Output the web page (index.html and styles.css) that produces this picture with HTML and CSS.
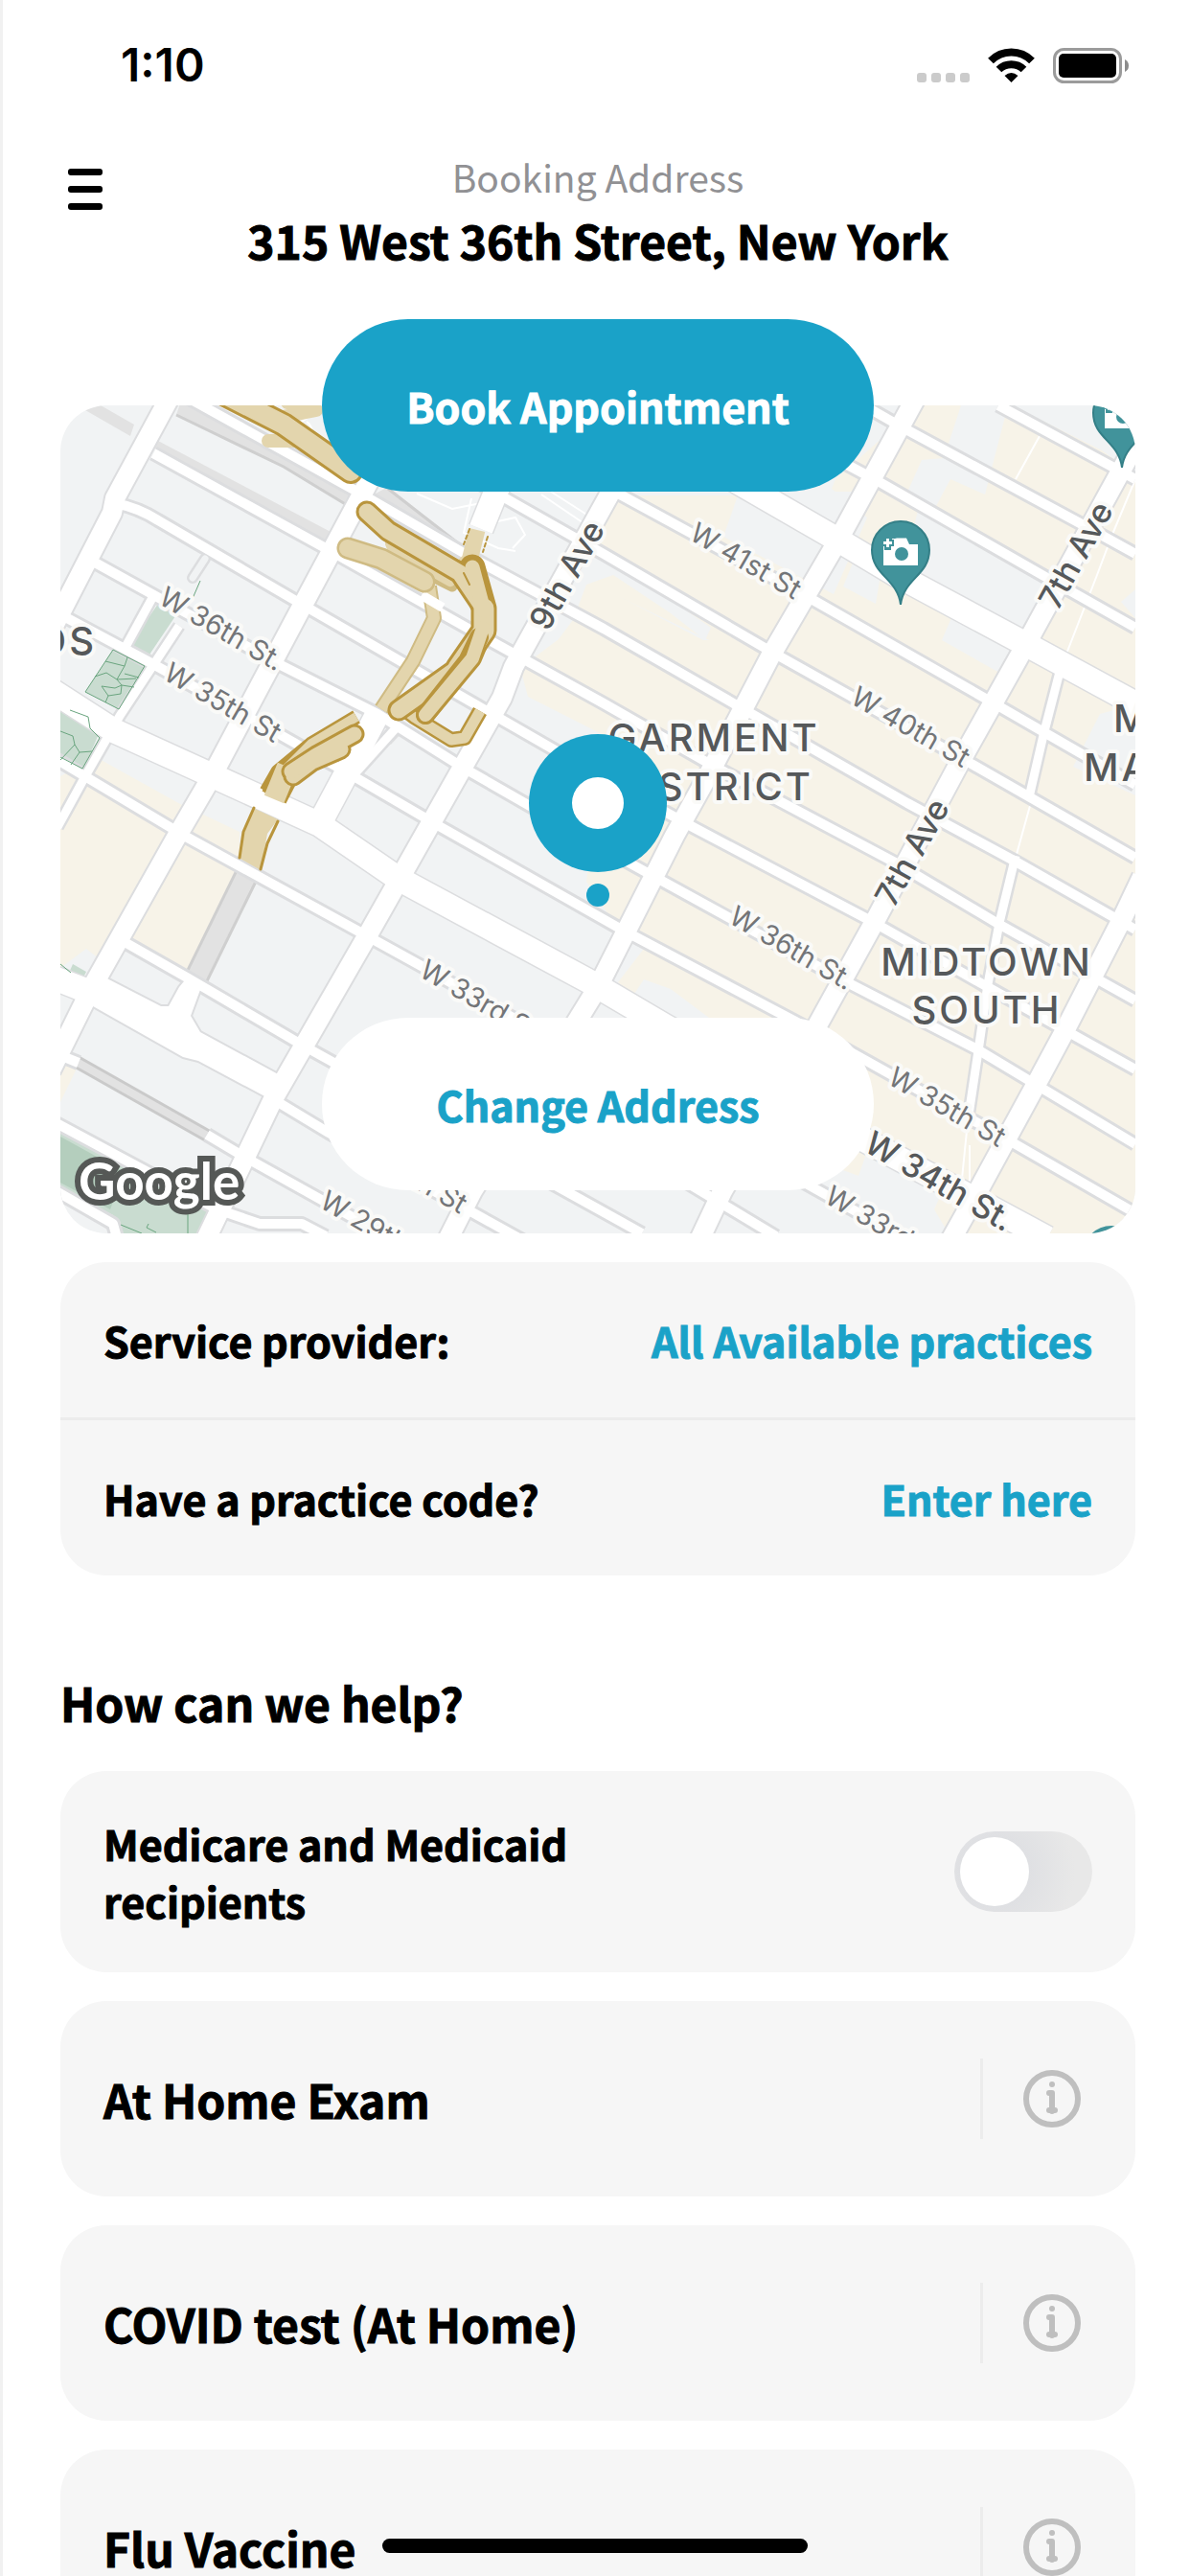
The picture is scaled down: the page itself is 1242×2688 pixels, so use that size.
FILE: index.html
```html
<!DOCTYPE html>
<html lang="en">
<head>
<meta charset="utf-8">
<meta name="viewport" content="width=device-width, initial-scale=1">
<title>Book an appointment</title>
<link rel="stylesheet" href="styles.css">
</head>
<body>
<div class="screen">
  <div class="status">
    <span class="time">1:10</span>
    <svg class="status-icons" viewBox="957 45 222 44" width="222" height="44" aria-hidden="true">
      <g fill="#cbcbcb"><rect x="957" y="75" width="10" height="10" rx="3"/><rect x="972" y="75" width="10" height="10" rx="3"/><rect x="987" y="75" width="10" height="10" rx="3"/><rect x="1002" y="75" width="10" height="10" rx="3"/></g>
      <g fill="none" stroke="#000" stroke-width="8"><path d="M1034 62.500A30 30 0 0 1 1077 62.500"/><path d="M1042.500 71.500A18.500 18.500 0 0 1 1068.500 71.500"/></g>
      <path d="M1055.500 85L1048.500 78Q1055.500 72 1062.500 78Z"/>
      <rect x="1100.500" y="50.500" width="69" height="34" rx="10" fill="none" stroke="#9b9b9b" stroke-width="3"/>
      <rect x="1105" y="55" width="60" height="25" rx="5"/>
      <path d="M1174 61Q1178 63 1178 67.500Q1178 72 1174 74Z" fill="#8c8c8c"/>
    </svg>
  </div>

  <header class="header">
    <button class="menu" type="button" aria-label="Menu"><span></span><span></span><span></span></button>
    <div class="address">
      <p class="caption">Booking Address</p>
      <h1>315 West 36th Street, New York</h1>
    </div>
  </header>

  <section class="map-wrap">
    <svg class="map" viewBox="63 423 1122 864" preserveAspectRatio="xMidYMid slice" role="img" aria-label="Map of Midtown South">
      <defs>
        <g id="streets">
          <path d="M1042 423L1185 500"/>
          <path d="M905 425L940 445L1129 547L1185 578"/>
          <path d="M800 440L918 503L1093 603L1185 655"/>
          <path d="M600 490L649 517L838 620L1034 732L1185 819"/>
          <path d="M480 493L630 578L805 680L1005 792L1185 895"/>
          <path d="M196 415L380 517L489 580L630 656L776 740L947 838L1060 899L1185 970"/>
          <path d="M160 473L347 576L489 656L630 734L744 799L936 901L1042 964L1185 1044"/>
          <path d="M120 525Q145 530 165 543L314 630L503 739L630 812L725 864L911 962L1031 1030L1185 1116"/>
          <path d="M90 582L293 694L394 745L485 802L656 900L882 1024L1020 1095L1185 1194"/>
          <path d="M55 637L158 692L293 767L369 810L460 863L649 970L838 1070L1053 1190L1185 1266"/>
          <path d="M55 790L194 873L380 975L438 1007L850 1240L940 1290"/>
          <path d="M130 983L202 1024L318 1092L670 1287"/>
          <path d="M700 1224L810 1290"/>
          <path d="M290 1150L343 1182L547 1295"/>
          <path d="M55 1098L82 1109"/><path d="M216 1184L253 1206L400 1288"/>
          <path d="M55 1170L227 1262L271 1277H315L340 1290"/>
          <path d="M55 1241L118 1277L123 1295"/>
        </g>
        <g id="avenues">
          <path d="M178 413L120 520L117 535L50 665"/>
          <path d="M390 493L314 635L220 812L185 872L95 1032L53 1117"/>
          <path d="M645 500L536 696L524 728L482 802L383 977L285 1147L214 1295"/>
          <path d="M957 413L874 565L805 683L744 800L704 872L624 1030L493 1243L465 1298"/>
          <path d="M1195 445L1169 493L1071 672L1002 795L911 965L853 1070L754 1243L728 1298"/>
          <path d="M1192 915L1172 957L1109 1080L1080 1134L1013 1257L990 1298"/>
        </g>
        <g id="wides">
          <path d="M765 500L874 563L936 600L1074 674L1190 737"/>
          <path d="M50 718L120 763L333 860L416 917L613 1023L693 1070L903 1190L1093 1292"/>
          <path d="M50 1018L96 1036"/>
          <path d="M525 495L502 552"/>
          <path d="M394 745L362 806L330 866"/>
        </g>
        <g id="lanes">
          <path d="M187 653L125 747L89 810L60 863"/>
          <path d="M160 622L131 675"/>
          <path d="M413 760L368 810"/>
          <path d="M1107 697L1089 767L1074 832"/>
          <path d="M1060 893L1043 963L1031 1027L1022 1090L1009 1177"/>
        </g>
        <path id="junction" d="M187 1030L192 1024H204L210 1030L199 1060L209 1077L294 1123L282 1147L207 1107L191 1103L90 1046L100 1015L168 1050H176Z"/>
        <g id="place-pin">
          <path d="M940 631C937 604 910 600 910 574A30 30 0 0 1 970 574C970 600 943 604 940 631Z" fill="#41939b" stroke="#347f87" stroke-width="2"/>
          <path d="M922 568H931V562H934L936 561.500H946L949 568H958V590H922Z" fill="#fff"/>
          <circle cx="941" cy="578" r="7" fill="#41939b"/>
          <path d="M926.500 560V574M920 566.500H933" stroke="#41939b" stroke-width="7"/>
          <path d="M926.500 562V571M922 566.500H931" stroke="#fff" stroke-width="3"/>
        </g>
      </defs>

      <rect x="63" y="423" width="1122" height="864" fill="#f1f3f4"/>
      <g fill="#f7f3e8">
        <path d="M951 423H1185V1287H990L975 1262L985 1240L903 1207L896 1227L850 1210L740 1062L700 1032L672 1022L660 1040L645 1025L672 990L649 975L612 920L630 767L551 727L543 697L583 667L598 647L612 610L640 600L700 640L736 668L742 655L620 570L640 517L770 517L755 560L870 620L905 540L868 510L872 500L940 440Z"/>
        <path d="M63 810L100 790L190 840L170 890L103 1000L90 990L63 1010Z"/>
        <path d="M208 848L250 868V905L205 1018L133 980L190 873Z"/>
        <path d="M63 1108L80 1115L63 1150Z"/>
      </g>
      <g fill="#f1f3f4">
        <path d="M1003 423H1052L1028 516L992 500L976 530L945 518L962 480L985 478Z"/>
        <path d="M1056 423H1185V495L1150 470Z"/>
        <path d="M958 533L1093 607L1071 660L942 595Z"/>
        <path d="M893 580L920 594L914 630L880 612Z"/>
        <path d="M995 640L1060 675L1045 703L983 668Z"/>
        <path d="M1170 628L1185 615V645Z"/>
        <path d="M1148 745L1185 735V830L1120 800Z"/>
        <path d="M620 610L740 668L734 668L655 627Z"/>
        <path d="M770 513L893 513L875 548L830 545Z"/>
      </g>
      <g fill="#c9dcd0">
        <path d="M165 630L185 640L156 683L136 672Z"/>
        <path d="M118 678L151 695L124 740L89 722Z"/>
        <path d="M73 736L107 757L87 803L63 790V740Z"/>
        <path d="M76 1006L90 1014L86 1022L72 1015Z"/>
        <path d="M63 1180L220 1266L206 1287H125L118 1268L63 1240Z"/>
      </g>
      <path d="M63 1186L130 1223L115 1262L63 1234Z" fill="#b4cebd"/>
      <g fill="#e2e2e2">
        <path d="M184 433L296 487L362 527L372 515L300 468L190 415Z"/>
        <path d="M89 428L136 455L140 443L105 423Z"/>
        <path d="M165 460L347 556L342 566L160 467Z"/>
        <path d="M405 508L482 568L470 572L392 515Z"/>
        <path d="M570 513L630 553M400 770L422 762L408 777Z"/>
      </g>
      <path d="M184 433L296 487L362 527M405 510L482 570" fill="none" stroke="#cfcfcf" stroke-width="3"/>
      <g fill="none" stroke="#fff" stroke-width="2">
        <path d="M565 516L618 552M575 513L625 545M435 515L472 531L502 525M492 520L484 556L520 572L538 575M515 545L538 540L548 558L535 572M1085 455L1060 500M1160 560L1145 600L1110 690M1185 500L1160 560M1078 830L1060 895M1009 1180L1004 1230M1012 1195V1240M320 440Q328 445 325 460M330 430L300 450"/>
      </g>
      <g fill="none" stroke-linecap="butt">
        <path d="M258 912L205 1020" stroke="#cfcfcf" stroke-width="26"/>
        <path d="M258 912L205 1020" stroke="#e2e2e2" stroke-width="20"/>
        <path d="M80 1108L218 1186" stroke="#cacaca" stroke-width="14"/>
        <path d="M80 1108L218 1186" stroke="#e2e2e2" stroke-width="8"/>
      </g>

      <g fill="none" stroke="#dcdddf" stroke-linejoin="round">
        <use href="#streets" stroke-width="16"/>
        <use href="#lanes" stroke-width="14"/>
        <use href="#avenues" stroke-width="24"/>
        <use href="#wides" stroke-width="28"/>
        <path d="M214 583L201 603" stroke-width="12" stroke-linecap="round"/>
        <use href="#junction" stroke-width="4"/>
      </g>
      <g fill="none" stroke="#fff" stroke-linejoin="round">
        <use href="#streets" stroke-width="10"/>
        <use href="#lanes" stroke-width="9"/>
        <use href="#avenues" stroke-width="20"/>
        <use href="#wides" stroke-width="25"/>
      </g>
      <use href="#junction" fill="#fff"/>
      <path d="M214 583L201 603" stroke="#f1f3f4" stroke-width="7" stroke-linecap="round"/>
      <g fill="none" stroke="#6aa57f" stroke-width="1">
        <path d="M118 678L151 695L124 740L89 722ZM99 706L111 702L122 709L142 708M110 690L130 695L133 686M130 695L122 709L127 715L126 724L113 726L106 716L120 718L127 715L140 717M113 726L110 733M130 703L145 707"/>
        <path d="M73 741L92 748L94 760L104 770L86 802L63 790M63 763L76 768L78 777L63 793M78 777L83 785L74 798M83 785L96 784M209 606L199 629"/>
        <path d="M126 1278L148 1287M155 1277L153 1281L163 1286M196 1263V1287M63 1006L74 1015"/>
      </g>

      <g fill="none" stroke-linecap="round" stroke-linejoin="round">
        <path d="M280 438L330 428L300 420M280 460H310" stroke="#e3d5ad" stroke-width="14"/>
        <path d="M235 412L296 443L366 492" stroke="#b9953d" stroke-width="26"/>
        <path d="M235 412L296 443L366 492" stroke="#e3d5ad" stroke-width="20"/>

        <path d="M498 553L490 585L482 592" stroke="#e3d5ad" stroke-width="17" stroke-linecap="butt"/>
        <path d="M490 552L484 568M509 560L504 576" stroke="#b9953d" stroke-width="2" stroke-dasharray="4 3"/>

        <path d="M448 612L453 645L431 690L398 740" stroke="#cfbb83" stroke-width="16" stroke-linecap="butt"/>
        <path d="M448 612L453 645L431 690L398 740" stroke="#e3d5ad" stroke-width="12" stroke-linecap="butt"/>
        <path d="M440 621L462 634" stroke="#fff" stroke-width="10" stroke-linecap="butt"/>
        <path d="M408 567L418 585L472 612L480 595" stroke="#cfbb83" stroke-width="11"/>
        <path d="M408 567L475 600L470 606L410 572Z" fill="#e3d5ad" stroke="#e3d5ad" stroke-width="12"/>
        <path d="M363 572L398 583L443 607" stroke="#cfbb83" stroke-width="23"/>
        <path d="M363 572L398 583L443 607" stroke="#e3d5ad" stroke-width="18"/>

        <path d="M415 735L432 748L471 772L485 770L501 742" stroke="#b9953d" stroke-width="16" stroke-linecap="butt"/>
        <path d="M415 735L432 748L471 772L485 770L501 742" stroke="#e3d5ad" stroke-width="11" stroke-linecap="butt"/>
        <path d="M493 592L505 633V658L493 687L444 746" stroke="#b9953d" stroke-width="20"/>
        <path d="M383 534L405 554L480 598L505 635V658L478 697L416 741" stroke="#b9953d" stroke-width="23"/>
        <path d="M493 592L505 635V658L478 697" stroke="#b9953d" stroke-width="27"/>
        <path d="M383 534L405 554L480 598L505 635V658L478 697L416 741" stroke="#e3d5ad" stroke-width="17"/>
        <path d="M505 635V658L478 697" stroke="#e3d5ad" stroke-width="21"/>
        <path d="M500 665L488 690L444 746" stroke="#b9953d" stroke-width="20"/>
        <path d="M504 655L493 687L444 746" stroke="#e3d5ad" stroke-width="14"/>
        <path d="M493 592L505 637" stroke="#e3d5ad" stroke-width="15"/>
        <path d="M484 598L490 610" stroke="#b9953d" stroke-width="2"/>

        <path d="M372 748L325 776L290 805L278 826" stroke="#b9953d" stroke-width="15" stroke-linecap="butt"/>
        <path d="M372 748L325 776L296 805L280 830" stroke="#e3d5ad" stroke-width="10" stroke-linecap="butt"/>
        <path d="M300 805L286 832" stroke="#b9953d" stroke-width="28" stroke-linecap="butt"/>
        <path d="M300 800L286 834" stroke="#e3d5ad" stroke-width="22" stroke-linecap="butt"/>
        <path d="M356 782L326 795L306 810" stroke="#b9953d" stroke-width="21"/>
        <path d="M370 766L330 788L304 805" stroke="#b9953d" stroke-width="21"/>
        <path d="M356 782L326 795L306 810" stroke="#e3d5ad" stroke-width="15"/>
        <path d="M370 766L330 788L304 805" stroke="#e3d5ad" stroke-width="15"/>
        <path d="M264 843L254 870L249 895L272 908L279 870L290 855Z" fill="#e3d5ad" stroke="none"/>
        <path d="M265 843L254 868L250 895M290 857L279 880L272 907" stroke="#b9953d" stroke-width="3"/>
      </g>

      <g class="street">
        <text transform="translate(164 629) rotate(30)">W 36th St.</text>
        <text transform="translate(169 708) rotate(30)">W 35th St</text>
        <text transform="translate(718 562) rotate(30)">W 41st St</text>
        <text transform="translate(886 733) rotate(30)">W 40th St</text>
        <text transform="translate(759 962) rotate(30)">W 36th St.</text>
        <text transform="translate(925 1130) rotate(30)">W 35th St</text>
        <text transform="translate(859 1254) rotate(30)">W 33rd St</text>
        <text transform="translate(436 1018) rotate(30)">W 33rd St</text>
        <text transform="translate(332 1259) rotate(30)">W 29th St</text>
        <text transform="translate(480 1267) rotate(30)" text-anchor="end">W 30th St</text>
      </g>
      <g class="avenue">
        <text transform="translate(572 660) rotate(-61)">9th Ave</text>
        <text transform="translate(1104 638) rotate(-61)">7th Ave</text>
        <text transform="translate(933 948) rotate(-61)">7th Ave</text>
        <text transform="translate(900 1200) rotate(30)">W 34th St.</text>
      </g>
      <g class="district">
        <text x="745" y="784" text-anchor="middle">GARMENT</text>
        <text x="745" y="835" text-anchor="middle">DISTRICT</text>
        <text x="1030" y="1018" text-anchor="middle">MIDTOWN</text>
        <text x="1030" y="1068" text-anchor="middle">SOUTH</text>
        <text x="1162" y="764">MIDTOWN</text>
        <text x="1131" y="815">MANHATTAN</text>
        <text x="101" y="683" text-anchor="end">YARDS</text>
      </g>

      <use href="#place-pin"/>
      <use href="#place-pin" x="231" y="-143"/>
      <circle cx="1160" cy="1309" r="30" fill="#41939b"/>
      <text class="brand" x="82" y="1252">Google</text>

      <circle cx="624" cy="838" r="72" fill="#1aa2c8"/>
      <circle cx="624" cy="838" r="27" fill="#fff"/>
      <circle cx="624" cy="934" r="12" fill="#1aa2c8"/>
    </svg>
    <button class="pill pill-primary" type="button">Book Appointment</button>
    <button class="pill pill-plain" type="button">Change Address</button>
  </section>

  <section class="card provider">
    <div class="row"><span>Service provider:</span><button class="link" type="button">All Available practices</button></div>
    <div class="row"><span>Have a practice code?</span><button class="link" type="button">Enter here</button></div>
  </section>

  <h2>How can we help?</h2>

  <div class="card medicare">
    <label for="medicare">Medicare and Medicaid recipients</label>
    <input class="toggle" id="medicare" type="checkbox" role="switch">
  </div>
  <div class="card service">
    <h3>At Home Exam</h3>
    <button class="info" type="button" aria-label="About At Home Exam"><svg viewBox="0 0 60 60" width="60" height="60"><use href="#info-icon"/></svg></button>
  </div>
  <div class="card service">
    <h3>COVID test (At Home)</h3>
    <button class="info" type="button" aria-label="About COVID test"><svg viewBox="0 0 60 60" width="60" height="60"><use href="#info-icon"/></svg></button>
  </div>
  <div class="card service">
    <h3>Flu Vaccine</h3>
    <button class="info" type="button" aria-label="About Flu Vaccine"><svg viewBox="0 0 60 60" width="60" height="60"><use href="#info-icon"/></svg></button>
  </div>
  <div class="home-indicator"></div>
</div>
<svg class="symbols" aria-hidden="true">
  <symbol id="info-icon" viewBox="0 0 60 60">
    <circle cx="30" cy="30" r="27" fill="none" stroke="#bfbfbf" stroke-width="6"/>
    <circle cx="30" cy="15" r="3" fill="#bfbfbf"/>
    <path d="M27 24H30V43" fill="none" stroke="#bfbfbf" stroke-width="6" stroke-linecap="round" stroke-linejoin="round"/>
    <path d="M27 42H33" stroke="#bfbfbf" stroke-width="6" stroke-linecap="round"/>
  </symbol>
</svg>
</body>
</html>
```
FILE: styles.css
```css
* { box-sizing: border-box; }

body {
  margin: 0;
  background: #fff;
  color: #000;
  font-family: "Noto Sans CJK SC", "Noto Sans", sans-serif;
}

h1, h2, h3, p { margin: 0; }

h1, h2, h3, .row, .pill, .medicare label { -webkit-text-stroke: 1px currentColor; }

button {
  border: 0;
  padding: 0;
  background: none;
  font: inherit;
  color: inherit;
}

.symbols { position: absolute; width: 0; height: 0; }

.screen {
  height: 100vh;
  overflow: hidden;
  padding: 0 57px 0 60px;
  border-left: 3px solid #f1f1f1;
}

.status {
  display: flex;
  justify-content: space-between;
  align-items: center;
  height: 136px;
  padding: 0 6px 0 63px;
}

.time {
  font-family: Inter, sans-serif;
  font-size: 48px;
  font-weight: 600;
  line-height: 60px;
}

.header {
  display: grid;
  grid-template-columns: 48px 1fr 48px;
  padding: 18px 0 137px;
}

.menu {
  display: flex;
  flex-direction: column;
  gap: 11px;
  height: 48px;
  padding: 22px 0 0 8px;
}

.menu span {
  flex: none;
  width: 36px;
  height: 7px;
  border-radius: 3px;
  background: #000;
}

.address { text-align: center; }

.caption {
  color: #919194;
  font-size: 39px;
  line-height: 60px;
}

h1 {
  font-size: 48px;
  line-height: 72px;
}

.map-wrap {
  position: relative;
  margin-bottom: 30px;
}

.map {
  display: block;
  width: 100%;
  height: 864px;
  border-radius: 48px;
}

.street, .avenue, .district {
  font-family: Inter, Roboto, sans-serif;
  paint-order: stroke;
  stroke: #fafaf8;
  stroke-width: 8px;
  stroke-linejoin: round;
}

.street { font-size: 29px; fill: #737578; }
.avenue { font-size: 34px; font-weight: 500; fill: #55585a; }

.district {
  font-size: 40px;
  font-weight: 500;
  letter-spacing: 3px;
  fill: #55585a;
}

.brand {
  font-family: Lato, sans-serif;
  font-size: 53px;
  font-weight: 700;
  fill: #fff;
  paint-order: stroke;
  stroke: #555856;
  stroke-width: 12px;
}

.pill {
  position: absolute;
  left: 50%;
  width: 576px;
  height: 180px;
  margin-left: -288px;
  border-radius: 90px;
  font-size: 43px;
  font-weight: 700;
  line-height: 60px;
}

.pill-primary { top: -90px; background: #1aa2c8; color: #fff; }
.pill-plain { bottom: 45px; background: #fff; color: #1aa2c8; }

.card {
  border-radius: 48px;
  background: #f6f6f6;
}

.row {
  display: flex;
  justify-content: space-between;
  align-items: center;
  height: 162px;
  padding: 0 45px;
  font-size: 43px;
  font-weight: 700;
  line-height: 60px;
}

.row + .row {
  height: 165px;
  border-top: 3px solid #ececec;
}

.link { color: #1aa2c8; }

h2 {
  padding: 96px 0 36px;
  font-size: 48px;
  line-height: 72px;
}

.medicare {
  display: flex;
  justify-content: space-between;
  align-items: center;
  height: 210px;
  padding: 0 45px;
}

.medicare label {
  width: 60%;
  font-size: 43px;
  font-weight: 700;
  line-height: 60px;
}

.toggle {
  appearance: none;
  width: 144px;
  height: 84px;
  margin: 0;
  padding: 6px;
  border-radius: 42px;
  background: radial-gradient(circle at 42px 42px, #dfe0e3 36px, #e8e8e8 84px);
}

.toggle::before {
  content: "";
  display: block;
  width: 72px;
  height: 72px;
  border-radius: 50%;
  background: #fff;
}

.toggle:checked { background: #1aa2c8; }
.toggle:checked::before { margin-left: auto; }

.service {
  display: flex;
  justify-content: space-between;
  align-items: center;
  height: 204px;
  margin-top: 30px;
  padding: 0 57px 0 45px;
}

h3 {
  font-size: 48px;
  line-height: 72px;
}

.info {
  height: 84px;
  padding-left: 42px;
  border-left: 3px solid #ececec;
}

.info svg { display: block; }

.home-indicator {
  position: fixed;
  bottom: 24px;
  left: 50%;
  width: 444px;
  height: 15px;
  margin-left: -222px;
  border-radius: 8px;
  background: #000;
}
```
